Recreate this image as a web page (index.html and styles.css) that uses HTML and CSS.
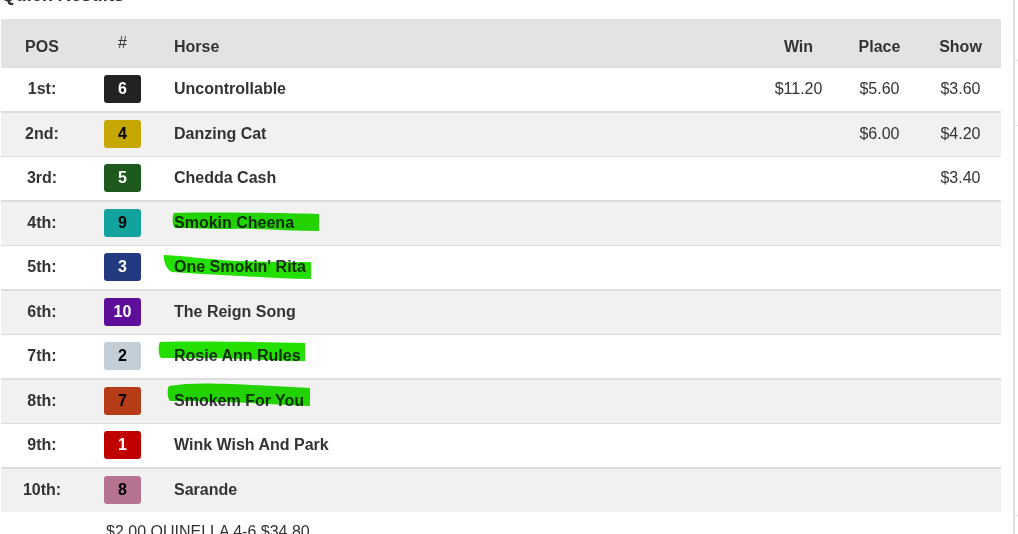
FILE: index.html
```html
<!DOCTYPE html>
<html lang="en">
<head>
<meta charset="utf-8">
<title>Quick Results</title>
<link rel="stylesheet" href="styles.css">
</head>
<body>
<div class="page">
  <div class="main">
    <h4 class="title">Quick Results</h4>
    <div class="results">
      <table class="tbl">
        <colgroup>
          <col class="col-pos"><col class="col-num"><col class="col-horse"><col class="col-money"><col class="col-money"><col class="col-money">
        </colgroup>
        <thead>
          <tr>
            <th class="h-pos">POS</th>
            <th class="h-num">#</th>
            <th class="h-horse">Horse</th>
            <th>Win</th>
            <th>Place</th>
            <th>Show</th>
          </tr>
        </thead>
        <tbody>
          <tr class="odd"><td class="pos">1st:</td><td><span class="badge b6">6</span></td><td class="horse">Uncontrollable</td><td class="money">$11.20</td><td class="money">$5.60</td><td class="money">$3.60</td></tr>
          <tr class="even"><td class="pos">2nd:</td><td><span class="badge b4">4</span></td><td class="horse">Danzing Cat</td><td class="money"></td><td class="money">$6.00</td><td class="money">$4.20</td></tr>
          <tr class="odd"><td class="pos">3rd:</td><td><span class="badge b5">5</span></td><td class="horse">Chedda Cash</td><td class="money"></td><td class="money"></td><td class="money">$3.40</td></tr>
          <tr class="even"><td class="pos">4th:</td><td><span class="badge b9">9</span></td><td class="horse">Smokin Cheena</td><td class="money"></td><td class="money"></td><td class="money"></td></tr>
          <tr class="odd"><td class="pos">5th:</td><td><span class="badge b3">3</span></td><td class="horse">One Smokin' Rita</td><td class="money"></td><td class="money"></td><td class="money"></td></tr>
          <tr class="even"><td class="pos">6th:</td><td><span class="badge b10">10</span></td><td class="horse">The Reign Song</td><td class="money"></td><td class="money"></td><td class="money"></td></tr>
          <tr class="odd"><td class="pos">7th:</td><td><span class="badge b2">2</span></td><td class="horse">Rosie Ann Rules</td><td class="money"></td><td class="money"></td><td class="money"></td></tr>
          <tr class="even"><td class="pos">8th:</td><td><span class="badge b7">7</span></td><td class="horse">Smokem For You</td><td class="money"></td><td class="money"></td><td class="money"></td></tr>
          <tr class="odd"><td class="pos">9th:</td><td><span class="badge b1">1</span></td><td class="horse">Wink Wish And Park</td><td class="money"></td><td class="money"></td><td class="money"></td></tr>
          <tr class="even"><td class="pos">10th:</td><td><span class="badge b8">8</span></td><td class="horse">Sarande</td><td class="money"></td><td class="money"></td><td class="money"></td></tr>
        </tbody>
      </table>
      <svg class="marker" viewBox="0 0 1002 534" width="1002" height="534" aria-hidden="true">
        <path d="M174,213 C210,212 280,213 319,214 L319,231 C290,231 262,228 230,229 C205,229 188,228 175,228 C172,226 172,215 174,213 Z"/>
        <path d="M164,255 C185,256 205,259 235,261 C260,262 290,262 311,262 L311,279 C285,279 262,277 240,276 C215,275 190,273 172,272 C166,270 163,259 164,255 Z"/>
        <path d="M160,342 C200,341 260,342 305,343 L305,361 C270,361 240,358 205,358 C185,358 170,358 161,358 C158,355 158,345 160,342 Z"/>
        <path d="M169,386 C185,383 205,383 230,384 C260,385 285,387 310,388 L310,406 C285,405 255,403 225,402 C200,401 185,401 170,401 C167,398 167,389 169,386 Z"/>
      </svg>
    </div>
    <p class="exotic">$2.00 QUINELLA 4-6 $34.80</p>
  </div>
  <aside class="side">
    <div class="side-block s1"></div>
    <div class="side-block s2"></div>
    <div class="side-block s3"></div>
  </aside>
</div>
</body>
</html>
```

FILE: styles.css
```css
html, body {
  margin: 0;
  padding: 0;
  background: #fff;
}

body {
  font-family: "Liberation Sans", Arial, Helvetica, sans-serif;
  color: #333;
  overflow: hidden;
}

.page {
  display: flex;
  height: 534px;
}

.main {
  width: 1002px;
  padding-left: 1px;
  box-sizing: border-box;
  flex: none;
}

.title {
  margin: -15px 0 14px;
  font-size: 18.5px;
  line-height: 20px;
  font-weight: bold;
  color: #333;
}

.results {
  position: relative;
  width: 1000px;
}

.tbl {
  width: 1000px;
  table-layout: fixed;
  border-collapse: separate;
  border-spacing: 0;
  font-size: 16px;
}

.col-pos { width: 82px; }
.col-num { width: 79px; }
.col-horse { width: 596px; }
.col-money { width: 81px; }

.tbl th {
  background: #e3e3e3;
  height: 48px;
  box-sizing: border-box;
  padding: 19px 0 0;
  line-height: 18px;
  font-weight: bold;
  text-align: center;
  vertical-align: top;
}

.tbl th.h-num {
  font-weight: normal;
  padding-top: 15px;
}

.tbl th.h-horse {
  text-align: left;
  padding-left: 12px;
}

.tbl td {
  padding: 7px 0 8px;
  line-height: 28px;
  text-align: center;
  vertical-align: top;
}

.tbl tr.odd td {
  background: #fff;
  border-top: 1px solid #ddd;
}

.tbl tr.even td {
  background: #f1f1f1;
  border-top: 2px solid #ddd;
}

.tbl td.pos {
  font-weight: bold;
}

.tbl td.horse {
  text-align: left;
  padding-left: 12px;
  font-weight: bold;
}

.tbl td.money {
  font-weight: normal;
}

.badge {
  display: inline-block;
  vertical-align: top;
  width: 37px;
  height: 28px;
  line-height: 28px;
  border-radius: 3px;
  font-weight: bold;
  font-size: 16px;
  text-align: center;
  color: #fff;
}

.b1 { background: #c00000; color: #fff; }
.b2 { background: #c3ced6; color: #000; }
.b3 { background: #233a80; color: #fff; }
.b4 { background: #c6a700; color: #000; }
.b5 { background: #1e5a1e; color: #fff; }
.b6 { background: #222222; color: #fff; }
.b7 { background: #b53c17; color: #000; }
.b8 { background: #b37391; color: #000; }
.b9 { background: #12a39f; color: #000; }
.b10 { background: #5d0f9a; color: #fff; }

.marker {
  position: absolute;
  left: -1px;
  top: -19px;
  pointer-events: none;
  mix-blend-mode: multiply;
  fill: #24e000;
}

.exotic {
  margin: 11px 0 0 105px;
  font-size: 16px;
  line-height: 18px;
}

.side {
  flex: 1;
  margin-left: 11px;
  border-left: 2px solid #e0e0e0;
}

.side-block {
  border-bottom: 1px solid #e0e0e0;
}

.s1 { height: 60px; }
.s2 { height: 64px; }
.s3 { height: 389px; }
```
